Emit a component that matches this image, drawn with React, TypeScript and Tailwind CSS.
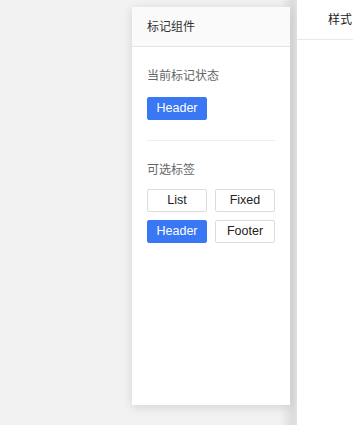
const font = { fontFamily: '"Liberation Sans", "Noto Sans CJK SC", sans-serif' };

const TagButton = ({ label, active }: { label: string; active?: boolean }) => (
  <button
    className={
      active
        ? "h-[23px] w-[60px] rounded-[2px] border border-[#3a77f5] bg-[#3a77f5] text-[12.5px] text-white"
        : "h-[23px] w-[60px] rounded-[2px] border border-[#dcdcdc] bg-white text-[12.5px] text-[#222]"
    }
  >
    {label}
  </button>
);

export default function App() {
  const options = ["List", "Fixed", "Header", "Footer"];

  return (
    <div className="flex h-[425px] w-[353px] overflow-hidden bg-[#f2f2f2]" style={font}>
      <div className="w-[297px] shrink-0 bg-[linear-gradient(to_right,#f2f2f2_0,#f2f2f2_280px,#dcdcdc_293px,#e2e2e2_297px)] pl-[132px] pr-[7px] pt-[7px]">
        <div className="flex h-[398px] w-[158px] flex-col bg-white shadow-[0_2px_10px_rgba(0,0,0,0.13)]">
          <div className="flex h-[40px] items-center border-b border-[#e4e4e4] bg-[#fafafa] px-[15px] text-[12px] text-[#333]">
            标记组件
          </div>
          <div className="px-[15px] pt-[20px]">
            <div className="text-[12px] leading-[18px] text-[#666]">当前标记状态</div>
            <div className="mt-[10px]">
              <TagButton label="Header" active />
            </div>
            <div className="mt-[20px] border-t border-[#efefef]" />
            <div className="mt-[20px] text-[12px] leading-[18px] text-[#666]">可选标签</div>
            <div className="mt-[10px] grid grid-cols-2 gap-x-[8px] gap-y-[8px]">
              {options.map((o) => (
                <TagButton key={o} label={o} active={o === "Header"} />
              ))}
            </div>
          </div>
        </div>
      </div>
      <div className="min-w-[260px] flex-1 bg-white">
        <div className="flex h-[40px] items-center border-b border-[#e8e8e8] pl-[31px] text-[12px] text-[#222]">
          样式
        </div>
      </div>
    </div>
  );
}
